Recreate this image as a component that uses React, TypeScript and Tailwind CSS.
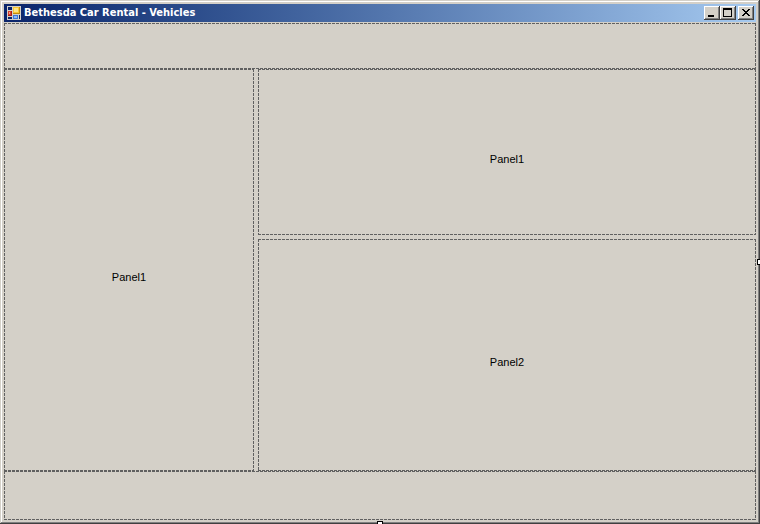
import type { ReactNode } from "react";
import { clsx } from "clsx";

function FormIcon() {
  return (
    <svg className="h-4 w-4 shrink-0" viewBox="0 0 16 16" shapeRendering="crispEdges" aria-hidden="true">
      <rect x="1" y="1" width="14" height="14" fill="#d4d0c8" />
      <rect x="2" y="2" width="4" height="3" fill="#0a246a" />
      <rect x="2" y="12" width="4" height="2" fill="#0a246a" />
      <rect x="2" y="6" width="4" height="5" fill="#a81c14" />
      <rect x="2" y="6" width="3" height="4" fill="#d8402c" />
      <rect x="3" y="7" width="1" height="2" fill="#f4a090" />
      <rect x="7" y="2" width="7" height="7" fill="#c08a10" />
      <rect x="7" y="2" width="6" height="6" fill="#f8c832" />
      <rect x="8" y="3" width="4" height="4" fill="#fce488" />
      <rect x="7" y="10" width="5" height="4" fill="#3c78d8" />
      <rect x="8" y="11" width="3" height="2" fill="#8cb8f8" />
      <rect x="13" y="10" width="1" height="4" fill="#0a246a" />
    </svg>
  );
}

function CaptionButton({ label, children }: { label: string; children: ReactNode }) {
  return (
    <button
      type="button"
      aria-label={label}
      className="h-[14px] w-4 bg-[#d4d0c8] shadow-[inset_-1px_-1px_#404040,inset_1px_1px_#ffffff,inset_-2px_-2px_#808080]"
    >
      <svg className="h-[14px] w-4" viewBox="0 0 16 14" shapeRendering="crispEdges" aria-hidden="true">
        {children}
      </svg>
    </button>
  );
}

function Panel({ label, className }: { label?: string; className?: string }) {
  return (
    <section
      className={clsx(
        "flex items-center justify-center pt-[14px] text-[11px] leading-4",
        "bg-[linear-gradient(90deg,#606060_75%,transparent_75%),linear-gradient(90deg,#606060_75%,transparent_75%),linear-gradient(#606060_75%,transparent_75%),linear-gradient(#606060_75%,transparent_75%)]",
        "[background-position:left_top,left_bottom,left_top,right_top]",
        "[background-size:4px_1px,4px_1px,1px_4px,1px_4px]",
        "[background-repeat:repeat-x,repeat-x,repeat-y,repeat-y]",
        className
      )}
    >
      {label}
    </section>
  );
}

export default function App() {
  return (
    <div className="relative flex min-h-screen flex-col bg-[#d4d0c8] p-1 font-['Liberation_Sans',Arial,sans-serif] text-black shadow-[inset_-1px_-1px_#404040,inset_1px_1px_#d4d0c8,inset_-2px_-2px_#808080,inset_2px_2px_#ffffff]">
      <header className="flex h-[18px] items-center gap-0.5 bg-linear-to-r from-[#0a246a] to-[#a6caf0] px-0.5">
        <FormIcon />
        <h1 className="flex-1 truncate font-['DejaVu_Sans_Condensed','DejaVu_Sans',sans-serif] text-[11px] leading-4 font-bold text-white">
          Bethesda Car Rental - Vehicles
        </h1>
        <div className="flex gap-0.5">
          <div className="flex">
            <CaptionButton label="Minimize">
              <rect x="4" y="9" width="6" height="2" />
            </CaptionButton>
            <CaptionButton label="Maximize">
              <path d="M3 2h9v9H3zM4 4v6h7V4z" fillRule="evenodd" />
            </CaptionButton>
          </div>
          <CaptionButton label="Close">
            <path d="M4 3h2v1h1v1h2V4h1V3h2v1h-1v1h-1v1H9v1h1v1h1v1h1v1h-2V9H9V8H7v1H6v1H4V9h1V8h1V7h1V6H6V5H5V4H4z" />
          </CaptionButton>
        </div>
      </header>

      <main className="flex flex-1 flex-col pt-px">
        <Panel className="h-[46px]" />
        <div className="flex flex-1 gap-1">
          <Panel label="Panel1" className="w-[250px]" />
          <div className="flex flex-1 flex-col gap-1">
            <Panel label="Panel1" className="h-[166px]" />
            <Panel label="Panel2" className="flex-1" />
          </div>
        </div>
        <Panel className="h-[49px]" />
      </main>

      {/* Resize grips */}
      <span className="absolute top-1/2 right-0 h-1.5 w-[3px] -translate-y-1/2 border border-r-0 border-black bg-white" />
      <span className="absolute bottom-0 left-1/2 h-[3px] w-1.5 -translate-x-1/2 border border-b-0 border-black bg-white" />
    </div>
  );
}
